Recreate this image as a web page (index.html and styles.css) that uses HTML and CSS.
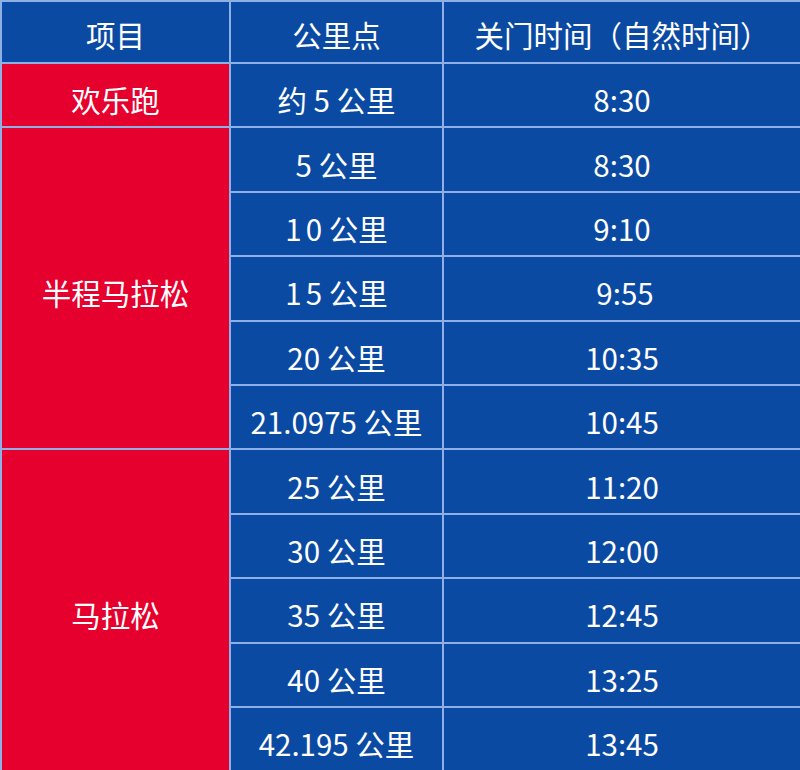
FILE: index.html
```html
<!DOCTYPE html>
<html lang="zh-CN">
<head>
<meta charset="utf-8">
<title>关门时间</title>
<link rel="stylesheet" href="styles.css">
</head>
<body>
<div class="table">
  <div class="cell head"><span>项目</span></div>
  <div class="cell head"><span>公里点</span></div>
  <div class="cell head"><span>关门时间（自然时间）</span></div>

  <div class="cell red"><span>欢乐跑</span></div>
  <div class="cell"><span>约 5 公里</span></div>
  <div class="cell"><span>8:30</span></div>

  <div class="cell red span5"><span>半程马拉松</span></div>
  <div class="cell"><span>5 公里</span></div>
  <div class="cell"><span>8:30</span></div>
  <div class="cell"><span>1<span class="sp">0</span> 公里</span></div>
  <div class="cell"><span>9:10</span></div>
  <div class="cell"><span>1<span class="sp">5</span> 公里</span></div>
  <div class="cell shift"><span>9:55</span></div>
  <div class="cell"><span>20 公里</span></div>
  <div class="cell"><span>10:35</span></div>
  <div class="cell"><span>21.0975 公里</span></div>
  <div class="cell"><span>10:45</span></div>

  <div class="cell red span5"><span>马拉松</span></div>
  <div class="cell"><span>25 公里</span></div>
  <div class="cell"><span>11:20</span></div>
  <div class="cell"><span>30 公里</span></div>
  <div class="cell"><span>12:00</span></div>
  <div class="cell"><span>35 公里</span></div>
  <div class="cell"><span>12:45</span></div>
  <div class="cell"><span>40 公里</span></div>
  <div class="cell"><span>13:25</span></div>
  <div class="cell"><span>42.195 公里</span></div>
  <div class="cell"><span>13:45</span></div>
</div>
</body>
</html>
```

FILE: styles.css
```css
html, body {
  margin: 0;
  padding: 0;
  width: 800px;
  height: 770px;
  overflow: hidden;
  background: #0b4aa2;
}

.table {
  display: grid;
  grid-template-columns: 227px 211px 356px;
  grid-template-rows: 60px repeat(11, 62.4px);
  gap: 2px;
  padding: 2px 0 0 2px;
  background: #8fb0e6;
  width: 800px;
  height: 790px;
  box-sizing: border-box;
  font-family: "Noto Sans CJK SC", "Noto Sans", sans-serif;
  font-size: 29.5px;
  color: #ffffff;
}

.cell {
  background: #0b4aa2;
  display: flex;
  align-items: center;
  justify-content: center;
  padding-top: 8px;
  box-sizing: border-box;
  white-space: nowrap;
}

.head {
  padding-top: 4px;
}

.red {
  background: #e6002d;
}

.span5 {
  grid-row: span 5;
  grid-column: 1;
}

.sp {
  margin-left: 4px;
}

.shift {
  padding-left: 6px;
}
```
